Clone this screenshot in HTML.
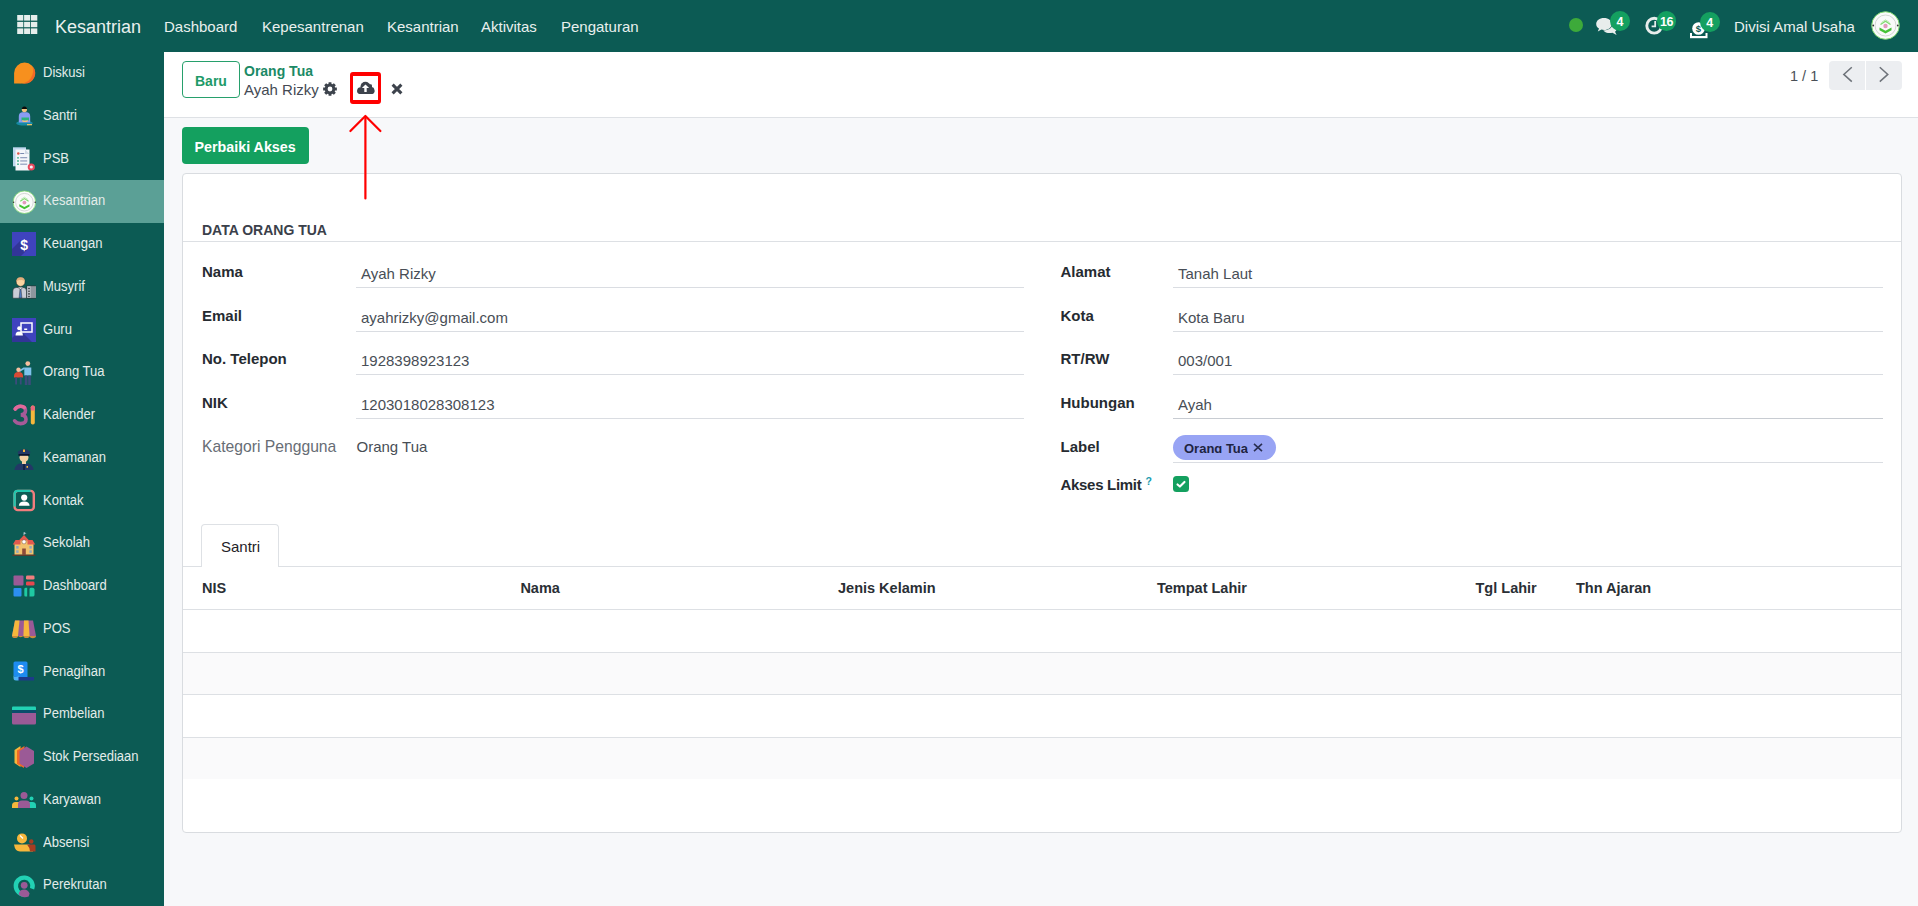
<!DOCTYPE html>
<html><head><meta charset="utf-8">
<style>
*{box-sizing:border-box;margin:0;padding:0}
html,body{width:1918px;height:906px;overflow:hidden;background:#F7F8FA;font-family:"Liberation Sans",sans-serif;position:relative}
.a{position:absolute;white-space:nowrap;line-height:1}
#nav{position:absolute;left:0;top:0;width:1918px;height:52px;background:#0C5B54}
#side{position:absolute;left:0;top:52px;width:164px;height:854px;background:#0C5B54}
.nt{color:#E9F0EE;font-size:15px}
.si{position:absolute;left:0;width:164px;height:42.75px}
.si .t{position:absolute;left:43px;top:12px;font-size:15.5px;line-height:1;color:#E3ECEA;transform-origin:0 0;transform:scaleX(0.84);white-space:nowrap}
.si svg{position:absolute;left:12px;top:9.35px}
.si.act{background:#5BA096}
#cp{position:absolute;left:164px;top:52px;width:1754px;height:66px;background:#fff;border-bottom:1px solid #DEE1E5}
#sheet{position:absolute;left:182px;top:173px;width:1720px;height:660px;background:#fff;border:1px solid #D9DCE0;border-radius:4px}
.lbl{font-size:15px;font-weight:700;color:#262B31}
.val{font-size:15px;color:#484E56}
.ul{position:absolute;height:1px;background:#DADDE2}
.th{font-size:14.5px;font-weight:700;color:#2A2F35}
.hl{position:absolute;left:183px;width:1718px;height:1px;background:#DDE0E4}
.bdg{width:19.8px;height:19.8px;border-radius:50%;background:#14A060;color:#fff;font-size:12.5px;font-weight:700;text-align:center;line-height:22.4px}
</style></head><body>
<div id="nav">
  <svg class="a" style="left:17px;top:15px" width="21" height="20" viewBox="0 0 21 20">
    <g fill="#E6EEEC"><rect x="0.2" y="0" width="6.1" height="5.6"/><rect x="7.1" y="0" width="6.0" height="5.6"/><rect x="13.9" y="0" width="6.4" height="5.6"/><rect x="0.2" y="6.9" width="6.1" height="5.3"/><rect x="7.1" y="6.9" width="6.0" height="5.3"/><rect x="13.9" y="6.9" width="6.4" height="5.3"/><rect x="0.2" y="13.4" width="6.1" height="5.6"/><rect x="7.1" y="13.4" width="6.0" height="5.6"/><rect x="13.9" y="13.4" width="6.4" height="5.6"/></g>
  </svg>
  <div class="a nt" style="left:55px;top:17.8px;font-size:18px">Kesantrian</div>
  <div class="a nt" style="left:164px;top:19.3px">Dashboard</div>
  <div class="a nt" style="left:262px;top:19.3px">Kepesantrenan</div>
  <div class="a nt" style="left:387px;top:19.3px">Kesantrian</div>
  <div class="a nt" style="left:481px;top:19.3px">Aktivitas</div>
  <div class="a nt" style="left:561px;top:19.3px">Pengaturan</div>
  <!-- right side -->
  <div class="a" style="left:1569px;top:18px;width:14px;height:14px;border-radius:50%;background:#3DAA3A"></div>

  <svg class="a" style="left:1596px;top:17px" width="22" height="19" viewBox="0 0 22 19"><path fill="#E8EDEC" d="M17 6C19.5 7 21 8.8 21 11C21 12.5 20.3 13.8 19 14.8L20.6 17.9L16.4 15.8C15.6 16 14.7 16.1 13.8 16.1C11 16.1 8.6 15 7.2 13.4C12.5 13.4 17 10.5 17 6Z"/><path fill="#E8EDEC" d="M8 0.9C3.5 0.9 0.2 3.5 0.2 6.9C0.2 8.8 1.3 10.5 3 11.6L1.8 14.6L5.5 12.6C6.3 12.8 7.1 12.9 8 12.9C12.5 12.9 15.8 10.2 15.8 6.9C15.8 3.5 12.5 0.9 8 0.9Z"/></svg>
  <svg class="a" style="left:1644px;top:15px" width="21" height="21" viewBox="0 0 21 21"><circle cx="10.2" cy="10.7" r="7.4" fill="none" stroke="#E8EDEC" stroke-width="2.9"/><path d="M11.2 6V11.3H7.6" fill="none" stroke="#E8EDEC" stroke-width="1.8"/></svg>
  <svg class="a" style="left:1689px;top:20px" width="20" height="19" viewBox="0 0 20 19"><path fill="#fff" d="M1 13H18.5V18.2H1Z"/><path fill="#0C5B54" d="M3 13H16.5V16H3Z"/><circle cx="9.5" cy="8.5" r="7.3" fill="#0C5B54"/><circle cx="9.5" cy="8.5" r="6.3" fill="#fff"/><text x="9.5" y="12" font-family="Liberation Sans" font-size="9.5" font-weight="700" fill="#0C5B54" text-anchor="middle">$</text></svg>
  <div class="a bdg" style="left:1610.2px;top:11.2px">4</div>
  <div class="a bdg" style="left:1656.6px;top:11.3px;letter-spacing:-0.5px">16</div>
  <div class="a bdg" style="left:1699.8px;top:12.2px">4</div>
  <svg class="a" style="left:1871px;top:11px" width="29" height="29" viewBox="0 0 29 29"><circle cx="14.5" cy="14.5" r="13.8" fill="#FAFAFA" stroke="#7CD56C" stroke-width="1"/><circle cx="14.5" cy="14.5" r="10.5" fill="none" stroke="#C9CEC9" stroke-width="0.8"/><path d="M8.5 16.5L14.5 19.8L20.5 16.5V19.2L14.5 22.5L8.5 19.2Z" fill="#46C236"/><path d="M9.5 13.5L14.5 10.2L19.5 13.5" fill="none" stroke="#7FD86E" stroke-width="1.3"/><path d="M10.5 11.5L14.5 8.8L18.5 11.5" fill="none" stroke="#A8E29C" stroke-width="0.8"/><circle cx="14.5" cy="15" r="2.2" fill="#E39BBE"/><circle cx="2.2" cy="14.5" r="0.9" fill="#333"/><circle cx="26.8" cy="14.5" r="0.9" fill="#333"/></svg>
  <div class="a nt" style="left:1734px;top:19.3px">Divisi Amal Usaha</div>
</div>
<div id="side">
 <div class="si" style="top:0"><svg width="24" height="24" viewBox="0 0 24 24"><path d="M2.1 22.6V12.1A10.5 10.5 0 1 1 12.6 22.6Z" fill="#F7901E"/><path d="M7 22.6A13 13 0 0 0 20.2 4.8A10.5 10.5 0 0 1 12.6 22.6Z" fill="#F26A26"/></svg><span class="t">Diskusi</span></div>
 <div class="si" style="top:42.75px"><svg width="24" height="24" viewBox="0 0 24 24"><ellipse cx="12.5" cy="19.2" rx="8.3" ry="2.4" fill="#168AA3"/><path d="M6.8 18.5V12.5Q6.8 8.8 10 8.3H15Q18.2 8.8 18.2 12.5V18.5Z" fill="#8A9CF2"/><rect x="9.5" y="13.5" width="7.5" height="3" fill="#2DB37A"/><path d="M10 16Q12.5 17.5 16 16L15.2 18H10.8Z" fill="#F3C07A"/><circle cx="12.4" cy="5.6" r="2.6" fill="#F2C27E"/><path d="M9.7 5Q9.8 2.4 12.4 2.4Q15 2.4 15.1 5Z" fill="#0A0A0A"/><rect x="15" y="20" width="5" height="1.3" fill="#E9C36A"/></svg><span class="t">Santri</span></div>
 <div class="si" style="top:85.5px"><svg width="24" height="24" viewBox="0 0 24 24"><rect x="1" y="0.3" width="13" height="19" fill="#BFD7EE"/><rect x="3.5" y="2.5" width="14" height="21" fill="#F5F6FA"/><path d="M13 2.5L17.5 7H13Z" fill="#D0D8E4"/><circle cx="6.3" cy="6.5" r="1.3" fill="#E2584C"/><g fill="#3EAE8A"><circle cx="6" cy="10.8" r="0.9"/><circle cx="6" cy="14" r="0.9"/><circle cx="6" cy="17.2" r="0.9"/></g><g fill="#6E7FA8"><rect x="8.2" y="10.3" width="7" height="0.9"/><rect x="8.2" y="13.5" width="7" height="0.9"/><rect x="8.2" y="16.7" width="7" height="0.9"/><rect x="8.2" y="6" width="4" height="0.9"/></g><circle cx="19.3" cy="20" r="3.6" fill="#E8485C"/><circle cx="19.3" cy="20" r="1.6" fill="#F3F0F6"/></svg><span class="t">PSB</span></div>
 <div class="si act" style="top:128.25px"><svg width="24" height="24" viewBox="0 0 24 24"><circle cx="12.4" cy="12.2" r="11.3" fill="#FBFBFB" stroke="#7CD56C" stroke-width="0.8"/><circle cx="12.4" cy="12.2" r="8.8" fill="none" stroke="#C4C9C4" stroke-width="0.7"/><path d="M7.3 14.3L12.4 17L17.5 14.3V16.5L12.4 19.2L7.3 16.5Z" fill="#46C236"/><path d="M8.2 11.3L12.4 8.6L16.6 11.3" fill="none" stroke="#7FD86E" stroke-width="1.1"/><path d="M9 9.4L12.4 7.2L15.8 9.4" fill="none" stroke="#A8E29C" stroke-width="0.7"/><circle cx="12.4" cy="12.6" r="1.9" fill="#E39BBE"/><circle cx="1.6" cy="12.2" r="0.8" fill="#333"/><circle cx="23.2" cy="12.2" r="0.8" fill="#333"/></svg><span class="t">Kesantrian</span></div>
 <div class="si" style="top:171.0px"><svg width="24" height="24" viewBox="0 0 24 24"><rect x="0" y="0" width="24.5" height="24.5" fill="#3F43BE"/><path d="M0 24.5V17L9 8L17 16L8.5 24.5Z" fill="#2F328F" opacity="0.8"/><text x="12.2" y="17.6" font-family="Liberation Sans" font-weight="700" font-size="14" fill="#fff" text-anchor="middle">$</text></svg><span class="t">Keuangan</span></div>
 <div class="si" style="top:213.75px"><svg width="24" height="24" viewBox="0 0 24 24"><rect x="14.8" y="10.9" width="9.5" height="12.3" fill="#8F969E" stroke="#1B1F22" stroke-width="0.5"/><rect x="15.2" y="11.3" width="3.5" height="11.5" fill="#B9BEC5"/><g fill="#2A2E33"><circle cx="17" cy="13.5" r="0.8"/><circle cx="17" cy="16.2" r="0.8"/><circle cx="17" cy="18.9" r="0.8"/><circle cx="17" cy="21.5" r="0.8"/></g><path d="M0.8 23.2V16Q0.8 12.4 4.5 12.4H11Q14.5 12.4 14.5 16V23.2Z" fill="#CACDD6" stroke="#1B1F22" stroke-width="0.5"/><path d="M8.1 13L7.1 23H9.9L8.9 13Z" fill="#4F7BC0" stroke="#1B1F22" stroke-width="0.4"/><path d="M5.8 12.5L8.5 14.2L11.2 12.5" fill="#F3F4F7" stroke="#1B1F22" stroke-width="0.4"/><circle cx="8.6" cy="7" r="4.4" fill="#F9D4A0" stroke="#1B1F22" stroke-width="0.5"/><path d="M4.2 7Q4 2.2 8.6 2.2Q13.2 2.2 13 7Q11.2 4.6 8.6 5.2Q6 4.6 4.2 7Z" fill="#E2AE7C"/></svg><span class="t">Musyrif</span></div>
 <div class="si" style="top:256.5px"><svg width="24" height="24" viewBox="0 0 24 24"><rect x="0" y="0" width="24.5" height="24.5" fill="#3F43BE"/><path d="M0 24.5V20L8 12L20.5 24.5Z" fill="#2F328F" opacity="0.8"/><rect x="9" y="5" width="11" height="9" fill="none" stroke="#fff" stroke-width="1.5"/><circle cx="7.2" cy="10.3" r="2" fill="#fff"/><path d="M3.5 17.5Q3.5 13.5 7.2 13.5Q10.9 13.5 10.9 17.5Z" fill="#fff"/><rect x="12.2" y="10.5" width="3" height="1.5" fill="#fff"/></svg><span class="t">Guru</span></div>
 <div class="si" style="top:299.25px"><svg width="24" height="24" viewBox="0 0 24 24"><circle cx="15.8" cy="2.6" r="2.4" fill="#F6BFA0"/><path d="M12.3 6.5H19.3V14.5H12.3Z" fill="#7EC3EC"/><rect x="12.8" y="14.5" width="2.6" height="9.5" fill="#3B4B7C"/><rect x="16.2" y="14.5" width="2.6" height="9.5" fill="#3B4B7C"/><path d="M12.5 7L7.5 10" stroke="#7EC3EC" stroke-width="1.8"/><circle cx="6.5" cy="8.8" r="2.2" fill="#F6BFA0"/><path d="M2 15Q2 11 6.5 11Q11 11 11 15V16.5H2Z" fill="#D84A35"/><rect x="3.2" y="16.5" width="1.8" height="7" fill="#3B4B7C"/><rect x="7.8" y="16.5" width="1.8" height="7" fill="#3B4B7C"/></svg><span class="t">Orang Tua</span></div>
 <div class="si" style="top:342.0px"><svg width="24" height="24" viewBox="0 0 24 24"><path d="M3.2 6Q5 3.3 8.6 3.3Q13.5 3.3 13.5 7.6Q13.5 11.6 8.8 11.9Q14 12.2 14 16.3Q14 20.6 8.6 20.6Q4.6 20.6 2.6 17.8" fill="none" stroke="#A65A98" stroke-width="3.6" stroke-linecap="round"/><path d="M3.2 6Q5 3.3 8.6 3.3Q11 3.3 12.3 4.5" fill="none" stroke="#E0699A" stroke-width="3.6" stroke-linecap="round"/><rect x="18.8" y="2.5" width="4" height="19" rx="1.8" fill="#F6B73C"/><path d="M18.8 4.3Q18.8 2.5 20.8 2.5Q22.8 2.5 22.8 4.3V7.5H18.8Z" fill="#E8677F"/></svg><span class="t">Kalender</span></div>
 <div class="si" style="top:384.75px"><svg width="24" height="24" viewBox="0 0 24 24"><path d="M2.5 24Q3 18.5 8 17.5H16Q21 18.5 21.5 24Z" fill="#233866"/><rect x="10" y="15" width="4" height="3" fill="#F4CFA3"/><circle cx="12" cy="11.5" r="4.5" fill="#F4CFA3"/><path d="M5.5 6Q12 0 18.5 6L17 9H7Z" fill="#233866"/><rect x="6.5" y="8" width="11" height="1.8" fill="#0C1530"/><rect x="11" y="3.5" width="2" height="2.5" fill="#F6B73C"/><rect x="11.4" y="18" width="1.2" height="6" fill="#0C1530"/><rect x="14.5" y="20" width="1.5" height="1.8" fill="#F6B73C"/></svg><span class="t">Keamanan</span></div>
 <div class="si" style="top:427.5px"><svg width="24" height="24" viewBox="0 0 24 24"><rect x="2.6" y="1.9" width="19.2" height="19.2" rx="3.2" fill="none" stroke="#F27D7D" stroke-width="2.4"/><path d="M2.6 17.5V5.1Q2.6 1.9 5.8 1.9H18.5" fill="none" stroke="#21C7AE" stroke-width="2.4"/><circle cx="12.2" cy="8.6" r="3.1" fill="#fff"/><path d="M6.8 16.8Q7.2 12.6 12.2 12.6Q17.2 12.6 17.6 16.8Z" fill="#fff"/></svg><span class="t">Kontak</span></div>
 <div class="si" style="top:470.25px"><svg width="24" height="24" viewBox="0 0 24 24"><path d="M12 0.3V3" stroke="#BFD0DA" stroke-width="0.8"/><path d="M12 0.3L14.5 1.2L12 2Z" fill="#BFD0DA"/><rect x="2.5" y="12" width="19" height="10.8" fill="#F2C26E"/><rect x="8" y="7" width="8" height="6" fill="#F2C26E"/><path d="M0.8 12.5L3.5 8H8.5V12.5Z M23.2 12.5L20.5 8H15.5V12.5Z" fill="#E25A4E"/><path d="M6.8 8.5L12 3L17.2 8.5Z" fill="#E25A4E"/><circle cx="12" cy="9.8" r="2.1" fill="#fff" stroke="#7A5040" stroke-width="0.5"/><rect x="10.2" y="16.5" width="3.6" height="6.3" fill="#8C4A3A"/><g fill="#8FA8C0"><rect x="4.2" y="14" width="2.4" height="2.6"/><rect x="17.4" y="14" width="2.4" height="2.6"/><rect x="4.2" y="18.3" width="2.4" height="2.6"/><rect x="17.4" y="18.3" width="2.4" height="2.6"/></g><rect x="0.5" y="22.6" width="23" height="1.4" fill="#5A3A2E"/></svg><span class="t">Sekolah</span></div>
 <div class="si" style="top:513.0px"><svg width="24" height="24" viewBox="0 0 24 24"><rect x="1.5" y="1.5" width="10" height="10" rx="1" fill="#9B5A96"/><rect x="14" y="1.5" width="8.5" height="4" rx="1.3" fill="#F07E7E"/><rect x="14" y="7.5" width="8.5" height="4" rx="1.3" fill="#E8474F"/><rect x="1.5" y="14" width="8" height="8.5" rx="1" fill="#2C8FF0"/><path d="M12.3 15Q12.3 13.8 14 13.8H15.2V22.5H13.3Q12.3 22.5 12.3 21Z" fill="#1FC9A2"/><path d="M17.5 15Q17.5 13.8 19.2 13.8H20.5Q22.5 14 22.5 15.5V21Q22.5 22.5 20.5 22.5H17.5Z" fill="#1FC9A2"/></svg><span class="t">Dashboard</span></div>
 <div class="si" style="top:555.75px"><svg width="24" height="24" viewBox="0 0 24 24"><path d="M3 3.6H21L24 19H0Z" fill="#9B5A96"/><path d="M3 3.6H7.5L6 19H0Z" fill="#F6B73C"/><path d="M12 3.6H16.5L17.6 19H11.4Z" fill="#F6B73C"/><path d="M0 19A3 2 0 0 0 6 19A3 2 0 0 0 11.4 19A3 2 0 0 0 17.6 19A3 2 0 0 0 24 19Z" fill="#E1903A" opacity="0.9"/></svg><span class="t">POS</span></div>
 <div class="si" style="top:598.5px"><svg width="24" height="24" viewBox="0 0 24 24"><rect x="6" y="17" width="16" height="3.5" fill="#1D3A8A"/><path d="M1.5 3Q1.5 1.5 3 1.5H14Q15.5 1.5 15.5 3V17H4A2.5 2.5 0 0 1 1.5 14.5Z" fill="#1E8CF0"/><path d="M1.5 14.5A2.5 2.5 0 0 0 6.5 14.5V20.5H4A2.5 2.5 0 0 1 1.5 18Z" fill="#4FB2F8"/><text x="8.5" y="13.3" font-family="Liberation Sans" font-weight="700" font-size="11" fill="#fff" text-anchor="middle">$</text></svg><span class="t">Penagihan</span></div>
 <div class="si" style="top:641.25px"><svg width="24" height="24" viewBox="0 0 24 24"><path d="M0 4.5Q0 3.5 1 3.5H23Q24 3.5 24 4.5V7H0Z" fill="#22D1B4"/><rect x="0" y="7" width="24" height="3" fill="#0B4D6B"/><path d="M0 10H24V20Q24 21.5 22.5 21.5H1.5Q0 21.5 0 20Z" fill="#9B5A96"/></svg><span class="t">Pembelian</span></div>
 <div class="si" style="top:684.0px"><svg width="24" height="24" viewBox="0 0 24 24"><path d="M8.5 1L2.5 5V18L8.5 22Z" fill="#F6B73C"/><path d="M12.5 1L5 5.5V19L12 23Z" fill="#F26A26"/><path d="M14.5 1.5L22 6V18.5L14.5 23L7.5 18.5V6Z" fill="#9B5A96"/></svg><span class="t">Stok Persediaan</span></div>
 <div class="si" style="top:726.75px"><svg width="24" height="24" viewBox="0 0 24 24"><circle cx="4.5" cy="10.5" r="2" fill="#F6B73C"/><circle cx="19.5" cy="10.5" r="2" fill="#22D1B4"/><path d="M0 17.5Q0 14 3.5 14H9V20H0Z" fill="#F6B73C"/><path d="M14 14H20.5Q24 14 24 17.5V20H14Z" fill="#22D1B4"/><circle cx="12" cy="7.5" r="3.5" fill="#9B5A96"/><path d="M6 20V16.5Q6 12.5 10 12.5H14Q18 12.5 18 16.5V20Z" fill="#9B5A96"/></svg><span class="t">Karyawan</span></div>
 <div class="si" style="top:769.5px"><svg width="24" height="24" viewBox="0 0 24 24"><circle cx="10" cy="7.4" r="5" fill="#F6B73C"/><path d="M8 4.5L11 7.5" stroke="#fff" stroke-width="1.2"/><circle cx="19.3" cy="10.5" r="2.2" fill="#A63D22"/><path d="M2 13.5H17Q19.5 14 21 17V20.5H8Q3 20.5 2 13.5Z" fill="#F6B73C"/><path d="M15 13.5H22.5Q23.5 13.5 23.5 15V20.5H18Q17.5 16 15 13.5Z" fill="#A63D22"/></svg><span class="t">Absensi</span></div>
 <div class="si" style="top:812.25px"><svg width="24" height="24" viewBox="0 0 24 24"><path d="M15.75 19.61A8.4 8.4 0 1 1 20.09 14.87" fill="none" stroke="#22D1B4" stroke-width="4.4"/><circle cx="12.2" cy="11.3" r="3.4" fill="#9B5A96"/><path d="M6.8 19Q8.5 15.6 12.2 15.6Q15.8 15.6 17.6 19.5L16.6 22.6Q14.5 23.4 12 23.2Q8.5 22.8 6.8 20.5Z" fill="#9B5A96"/></svg><span class="t">Perekrutan</span></div>
</div>
<div id="cp"></div>
<div class="a" style="left:182px;top:61px;width:58px;height:37px;border:1px solid #27A06C;border-radius:4px"></div>
<div class="a" style="left:195px;top:73.6px;font-size:14px;font-weight:700;color:#1E9A68">Baru</div>
<div class="a" style="left:244px;top:64px;font-size:14px;font-weight:700;color:#1B8A66">Orang Tua</div>
<div class="a" style="left:244px;top:81.9px;font-size:15px;color:#444A54">Ayah Rizky</div>
<svg class="a" style="left:323px;top:82px" width="14" height="14" viewBox="0 0 14 14"><path fill-rule="evenodd" fill="#3D434C" d="M12.06 5.43 L13.86 5.61 L13.86 8.39 L12.06 8.57 L11.69 9.47 L12.83 10.87 L10.87 12.83 L9.47 11.69 L8.57 12.06 L8.39 13.86 L5.61 13.86 L5.43 12.06 L4.53 11.69 L3.13 12.83 L1.17 10.87 L2.31 9.47 L1.94 8.57 L0.14 8.39 L0.14 5.61 L1.94 5.43 L2.31 4.53 L1.17 3.13 L3.13 1.17 L4.53 2.31 L5.43 1.94 L5.61 0.14 L8.39 0.14 L8.57 1.94 L9.47 2.31 L10.87 1.17 L12.83 3.13 L11.69 4.53Z M7 4.6A2.4 2.4 0 1 0 7 9.4A2.4 2.4 0 1 0 7 4.6Z"/></svg>
<svg class="a" style="left:357px;top:81px" width="18" height="14" viewBox="0 0 18 14"><g fill="#3D434C"><rect x="0.3" y="7.6" width="17.1" height="5.4" rx="2.7"/><circle cx="8.4" cy="5.6" r="4.9"/><rect x="10" y="3.3" width="5" height="6" rx="1.4"/><circle cx="14" cy="9.4" r="3.4"/><circle cx="3.6" cy="9.6" r="3.3"/></g><path fill="#fff" d="M8.5 3.4L4.9 7H7.3V10.9H9.7V7H12.1Z"/></svg>
<svg class="a" style="left:391px;top:83px" width="12" height="12" viewBox="0 0 12 12"><path d="M1.6 1.6L10.4 10.4M10.4 1.6L1.6 10.4" stroke="#3D434C" stroke-width="3"/></svg>
<div class="a" style="left:1790px;top:68.6px;font-size:14.5px;color:#4A4F57">1 / 1</div>
<div class="a" style="left:1829px;top:61px;width:36px;height:29px;background:#ECEEF1;border-radius:4px 0 0 4px"></div>
<div class="a" style="left:1866px;top:61px;width:36px;height:29px;background:#ECEEF1;border-radius:0 4px 4px 0"></div>
<svg class="a" style="left:1842px;top:66px" width="12" height="17" viewBox="0 0 12 17"><path d="M9.8 1.2L1.8 8.4L9.8 15.6" fill="none" stroke="#6E737A" stroke-width="1.5"/></svg>
<svg class="a" style="left:1878px;top:66px" width="12" height="17" viewBox="0 0 12 17"><path d="M1.8 1.2L9.8 8.4L1.8 15.6" fill="none" stroke="#6E737A" stroke-width="1.5"/></svg>
<div class="a" style="left:182px;top:127px;width:127px;height:37px;background:#14A05F;border-radius:4px"></div>
<div class="a" style="left:194.5px;top:140px;font-size:14.3px;font-weight:700;color:#fff">Perbaiki Akses</div>
<div id="sheet"></div>
<div class="a" style="left:202px;top:223.15px;font-size:14px;font-weight:700;color:#3A404A">DATA ORANG TUA</div>
<div class="hl" style="top:241px"></div>
<div class="a lbl" style="left:202px;top:264.1px">Nama</div>
<div class="a val" style="left:361px;top:266.1px">Ayah Rizky</div>
<div class="ul" style="left:356px;top:287px;width:668px"></div>
<div class="a lbl" style="left:202px;top:308.1px">Email</div>
<div class="a val" style="left:361px;top:310.1px">ayahrizky@gmail.com</div>
<div class="ul" style="left:356px;top:331px;width:668px"></div>
<div class="a lbl" style="left:202px;top:351.1px">No. Telepon</div>
<div class="a val" style="left:361px;top:353.1px">1928398923123</div>
<div class="ul" style="left:356px;top:374px;width:668px"></div>
<div class="a lbl" style="left:202px;top:395.1px">NIK</div>
<div class="a val" style="left:361px;top:397.1px">1203018028308123</div>
<div class="ul" style="left:356px;top:418px;width:668px"></div>
<div class="a lbl" style="left:1060.5px;top:264.1px">Alamat</div>
<div class="a val" style="left:1178px;top:266.1px">Tanah Laut</div>
<div class="ul" style="left:1173px;top:287px;width:710px"></div>
<div class="a lbl" style="left:1060.5px;top:308.1px">Kota</div>
<div class="a val" style="left:1178px;top:310.1px">Kota Baru</div>
<div class="ul" style="left:1173px;top:331px;width:710px"></div>
<div class="a lbl" style="left:1060.5px;top:351.1px">RT/RW</div>
<div class="a val" style="left:1178px;top:353.1px">003/001</div>
<div class="ul" style="left:1173px;top:374px;width:710px"></div>
<div class="a lbl" style="left:1060.5px;top:395.1px">Hubungan</div>
<div class="a val" style="left:1178px;top:397.1px">Ayah</div>
<div class="ul" style="left:1173px;top:418px;width:710px;background:#C8CCD2"></div>
<div class="a" style="left:202px;top:438.8px;font-size:15.7px;color:#676D75">Kategori Pengguna</div>
<div class="a val" style="left:356.5px;top:438.8px">Orang Tua</div>
<div class="a lbl" style="left:1060.5px;top:439.3px">Label</div>
<div class="a" style="left:1173px;top:435px;width:103px;height:25px;border-radius:12.5px;background:#98A4F4;overflow:hidden"><div class="a" style="left:11px;top:6.7px;font-size:13px;font-weight:700;color:#1E2442;height:11px;overflow:hidden;line-height:1">Orang Tua</div><svg class="a" style="left:80px;top:8px" width="10" height="9" viewBox="0 0 10 9"><path d="M1 0.8L9 8.2M9 0.8L1 8.2" stroke="#2A2F52" stroke-width="1.6"/></svg></div>
<div class="ul" style="left:1173px;top:462px;width:710px"></div>
<div class="a lbl" style="left:1060.5px;top:476.9px;letter-spacing:-0.3px">Akses Limit</div>
<div class="a" style="left:1145.5px;top:476px;font-size:10.5px;font-weight:700;color:#1A9CB0">?</div>
<div class="a" style="left:1173px;top:476px;width:16px;height:16px;border-radius:3.5px;background:#14A05F"></div>
<svg class="a" style="left:1173px;top:476px" width="16" height="16" viewBox="0 0 16 16"><path d="M4.5 8.4L6.9 10.6L11.5 5.9" fill="none" stroke="#fff" stroke-width="2.1" stroke-linecap="round" stroke-linejoin="round"/></svg>
<div class="hl" style="top:566px"></div>
<div class="a" style="left:201px;top:524px;width:78px;height:43px;background:#fff;border:1px solid #DEE1E5;border-bottom:none;border-radius:4px 4px 0 0"></div>
<div class="a" style="left:221px;top:539.3px;font-size:15px;color:#1F2328">Santri</div>
<div class="hl" style="top:609px"></div>
<div class="a th" style="left:202px;top:581.23px">NIS</div>
<div class="a th" style="left:520.4px;top:581.23px">Nama</div>
<div class="a th" style="left:838px;top:581.23px">Jenis Kelamin</div>
<div class="a th" style="left:1157px;top:581.23px">Tempat Lahir</div>
<div class="a th" style="left:1475.5px;top:581.23px">Tgl Lahir</div>
<div class="a th" style="left:1576px;top:581.23px">Thn Ajaran</div>
<div class="hl" style="top:652px"></div>
<div class="a" style="left:183px;top:653px;width:1718px;height:41px;background:#FAFAFB"></div>
<div class="hl" style="top:694px"></div>
<div class="hl" style="top:737px"></div>
<div class="a" style="left:183px;top:738px;width:1718px;height:41px;background:#FAFAFB"></div>
<div class="a" style="left:350px;top:72px;width:31px;height:32px;border-style:solid;border-color:#FF0000;border-width:4px 3.2px;border-radius:3px"></div>
<svg class="a" style="left:340px;top:105px" width="50" height="100" viewBox="340 105 50 100"><path d="M365.4 117V198.5" stroke="#FF0000" stroke-width="2.2" stroke-linecap="round"/><path d="M350.4 131L365.4 116L380.4 131" fill="none" stroke="#FF0000" stroke-width="2.2" stroke-linecap="round" stroke-linejoin="round"/></svg>

</body></html>
